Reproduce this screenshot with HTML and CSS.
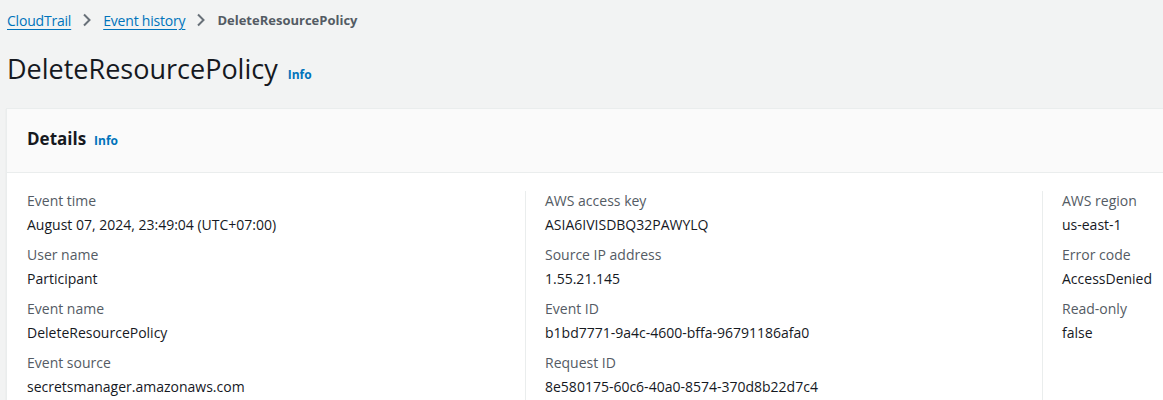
FILE: index.html
```html
<!DOCTYPE html>
<html>
<head>
<meta charset="utf-8">
<link rel="stylesheet" href="styles.css">
</head>
<body>
<div class="page">
  <nav class="crumbs">
    <a class="crumb-link" href="#">CloudTrail</a>
    <svg class="chev" width="10" height="14" viewBox="0 0 10 14"><path d="M2 1.5 L7.5 7 L2 12.5" fill="none" stroke="#687078" stroke-width="2"/></svg>
    <a class="crumb-link" href="#">Event history</a>
    <svg class="chev" width="10" height="14" viewBox="0 0 10 14"><path d="M2 1.5 L7.5 7 L2 12.5" fill="none" stroke="#687078" stroke-width="2"/></svg>
    <span class="crumb-current">DeleteResourcePolicy</span>
  </nav>
  <div class="title-row">
    <h1 class="title">DeleteResourcePolicy</h1>
    <a class="info" href="#">Info</a>
  </div>
  <section class="panel">
    <header class="panel-head">
      <h2 class="panel-title">Details</h2>
      <a class="info" href="#">Info</a>
    </header>
    <div class="panel-body">
      <div class="col">
        <div class="item"><div class="label">Event time</div><div class="value">August 07, 2024, 23:49:04 (UTC+07:00)</div></div>
        <div class="item"><div class="label">User name</div><div class="value">Participant</div></div>
        <div class="item"><div class="label">Event name</div><div class="value">DeleteResourcePolicy</div></div>
        <div class="item"><div class="label">Event source</div><div class="value">secretsmanager.amazonaws.com</div></div>
      </div>
      <div class="col divided">
        <div class="item"><div class="label">AWS access key</div><div class="value">ASIA6IVISDBQ32PAWYLQ</div></div>
        <div class="item"><div class="label">Source IP address</div><div class="value">1.55.21.145</div></div>
        <div class="item"><div class="label">Event ID</div><div class="value">b1bd7771-9a4c-4600-bffa-96791186afa0</div></div>
        <div class="item"><div class="label">Request ID</div><div class="value">8e580175-60c6-40a0-8574-370d8b22d7c4</div></div>
      </div>
      <div class="col divided">
        <div class="item"><div class="label">AWS region</div><div class="value">us-east-1</div></div>
        <div class="item"><div class="label">Error code</div><div class="value">AccessDenied</div></div>
        <div class="item"><div class="label">Read-only</div><div class="value">false</div></div>
      </div>
    </div>
  </section>
</div>
</body>
</html>
```
FILE: styles.css
```css
html, body {
  margin: 0;
  padding: 0;
  background: #f2f3f3;
  overflow: hidden;
  font-family: "Open Sans", "Noto Sans", sans-serif;
  color: #16191f;
}
.page {
  width: 1700px;
  padding: 9px 0 0 6px;
}
.crumbs {
  display: flex;
  align-items: center;
  height: 22px;
  padding-left: 1px;
  font-size: 14px;
}
.crumb-link {
  color: #0073bb;
  text-decoration: underline;
  text-underline-offset: 3px;
  letter-spacing: -0.2px;
}
.chev {
  margin: 0 11px 0 11px;
}
.crumb-current {
  color: #545b64;
  font-weight: 700;
  font-size: 13px;
}
.title-row {
  display: flex;
  align-items: baseline;
  padding-left: 1px;
  margin-top: 15px;
  height: 46px;
}
.title {
  margin: 0;
  font-size: 27px;
  font-weight: 400;
  line-height: 46px;
}
.info {
  color: #0073bb;
  font-size: 12px;
  font-weight: 700;
  text-decoration: none;
  margin-left: 10px;
}
.panel-head .info {
  margin-left: 8px;
}
.panel {
  margin-top: 16px;
  background: #fff;
  border: 1px solid #eaeded;
  border-right: none;
  box-shadow: 0 1px 1px rgba(0,28,36,0.1);
}
.panel-head {
  display: flex;
  align-items: baseline;
  background: #fafafa;
  height: 63px;
  padding: 0 20px;
  border-bottom: 1px solid #eaeded;
  line-height: 60px;
}
.panel-title {
  margin: 0;
  font-size: 17px;
  font-weight: 700;
}
.panel-body {
  display: flex;
  padding: 18px 20px 0 20px;
}
.col {
  width: 498px;
  flex: none;
}
.col.divided {
  border-left: 1px solid #eaeded;
  padding-left: 19px;
  width: 497px;
}
.item {
  margin-bottom: 10px;
}
.label {
  font-size: 14px;
  line-height: 20px;
  color: #545b64;
}
.value {
  font-size: 14px;
  line-height: 20px;
  margin-top: 4px;
  color: #16191f;
}
```
